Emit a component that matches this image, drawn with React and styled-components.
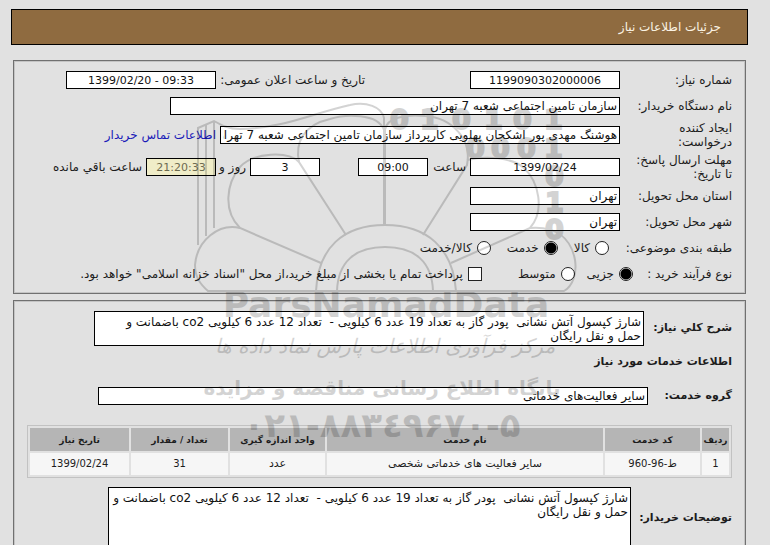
import React from "react";
import styled, { createGlobalStyle, css } from "styled-components";

const GlobalStyle = createGlobalStyle`
  html { scrollbar-width: none; }
  body { margin: 0; background: #e1e1e1; }
  *, *::before, *::after { box-sizing: border-box; }
`;

const Page = styled.main`
  position: relative;
  direction: rtl;
  padding: 9px 22px 0 11px;
  overflow: hidden;
  color: #1c1c1c;
  font: 12px/14px "DejaVu Sans", "Noto Sans", sans-serif;
`;

const TitleBar = styled.header`
  display: flex;
  align-items: center;
  height: 36px;
  padding: 0 26px;
  border: 1px solid #000;
  background: #8f6b40;
`;

const Title = styled.h1`
  margin: 0;
  color: #fbf3e4;
  font: inherit;
`;

const Panels = styled.form`
  display: flex;
  flex-direction: column;
  gap: 6px;
  margin: 15px 2px 0;
`;

const Panel = styled.fieldset`
  min-width: 0;
  margin: 0;
  padding: 6px 13px;
  border: 1px solid #707070;
  box-shadow: inset 0 0 0 1px #c4c4c4;
`;

const Row = styled.div`
  display: flex;
  align-items: center;
  gap: 4px;
  min-height: ${(p) => p.$height || 26}px;
  white-space: nowrap;
`;

const labelBox = css`
  flex: none;
  width: ${(p) => (p.$width ? `${p.$width}px` : "auto")};
  margin-right: ${(p) => p.$before || 0}px;
  white-space: ${(p) => (p.$wrap ? "pre-line" : "nowrap")};
  font-weight: ${(p) => (p.$bold ? "bold" : "normal")};
  font-size: ${(p) => (p.$bold ? 11 : 12)}px;
`;

const Label = styled.label`
  ${labelBox}
`;

const GroupName = styled.span`
  ${labelBox}
`;

const Heading = styled.h2`
  margin: 0;
  font-size: 11px;
  line-height: 26px;
`;

const box = css`
  flex: 0 1 ${(p) => p.$width}px;
  min-width: 0;
  width: ${(p) => p.$width}px;
  margin: 0;
  border: 1px solid #000;
  border-radius: 0;
  background: ${(p) => (p.$muted ? "#f0edc8" : "#fff")};
  color: ${(p) => (p.$muted ? "#6d6b50" : "#111")};
  text-align: ${(p) => (p.$numeric ? "center" : "right")};
  font: inherit;
  font-size: ${(p) => (p.$numeric ? 11 : 12)}px;
  outline: none;
`;

const TextBox = styled.input`
  ${box}
  height: 18px;
  padding: 0 2px;
`;

const TextArea = styled.textarea`
  ${box}
  display: block;
  height: ${(p) => p.$height}px;
  padding: 3px 2px 3px ${(p) => p.$inset || 0}px;
  line-height: 14px;
  resize: none;
  overflow: hidden;
`;

const Link = styled.a`
  color: #1a1ab8;
  text-decoration: none;
`;

const Option = styled.label`
  display: flex;
  align-items: center;
  gap: 5px;
  margin-left: ${(p) => p.$after || 8}px;
`;

const Radio = styled.input`
  appearance: none;
  flex: none;
  width: 14px;
  height: 14px;
  margin: 0;
  border: 1px solid #222;
  border-radius: 50%;
  background: #fff;
  &:checked {
    background: radial-gradient(circle, #000 5px, #fff 6px);
  }
`;

const Check = styled(Radio)`
  border-radius: 0;
`;

const Spacer = styled.span`
  width: 30px;
`;

const TableArea = styled.div`
  margin: 8px 0 9px;
`;

const TableFrame = styled.table`
  width: 100%;
  table-layout: fixed;
  border: 1px solid #c2c2c2;
  border-spacing: 2px;
  border-collapse: separate;
  text-align: center;
`;

const HeadCell = styled.th`
  width: ${(p) => (p.$width ? `${p.$width}px` : "auto")};
  height: 23px;
  padding: 0;
  background: #b5b5b5;
  font-size: 9px;
  white-space: nowrap;
`;

const Cell = styled.td`
  height: 22px;
  padding: 0;
  background: #f6f6f6;
  font-size: ${(p) => (p.$numeric ? 10 : 11)}px;
  white-space: nowrap;
`;

const WatermarkLayer = styled.svg`
  position: absolute;
  top: 90px;
  left: 50%;
  width: 400px;
  height: 370px;
  margin-left: -205px;
  pointer-events: none;
  opacity: 0.17;
  font-family: "DejaVu Sans", sans-serif;
  font-weight: bold;
`;

const PhoneNumber = styled.text`
  unicode-bidi: bidi-override;
`;

function Watermark() {
  return (
    <WatermarkLayer viewBox="180 90 400 370" aria-hidden="true" direction="ltr">
      <g fill="none" stroke="#000" strokeWidth="2">
        <path d="M384 225V118C382 107 366 101 350 105C310 114 285 128 240 129C228 129 221 125 214 121L198 128V245M206 125V236M214 121V228" />
        <path d="M385 225V130C386 118 405 114 425 116C453 118 472 140 467 165L423 235" />
        <path d="M384 130C378 113 345 114 330 119C303 125 295 143 299 162L346 235" />
        <path d="M299 162C288 151 254 152 240 167C226 184 223 211 240 228L321 263" />
        <path d="M240 228C219 223 197 240 195 265C195 277 200 284 208 291H564C573 286 577 273 575 260C571 238 556 226 530 228L451 263" />
        <path d="M467 160C485 156 512 157 524 168C539 182 545 211 530 228" />
        <path d="M316 291C318 248 343 225 385 225S453 248 456 291M337 291C338 262 355 247 385 247S432 262 433 291" />
      </g>
      <g fontSize="27" stroke="#000" strokeWidth="2">
        <text x="390 420 452 484 513 544" y="129">010101</text>
        <text x="466 491 517 544" y="158">0001</text>
        <text x="545" y="186">0</text>
        <text x="545" y="212">1</text>
        <text x="545" y="239">0</text>
      </g>
      <text x="386" y="317" fontSize="36" textAnchor="middle">ParsNamadData</text>
      <g textAnchor="middle" direction="rtl">
        <text x="385" y="353" fontSize="20" fontWeight="normal" fontStyle="italic">مرکز فرآوری اطلاعات پارس نماد داده ها</text>
        <text x="382" y="395" fontSize="20">پایگاه اطلاع رسانی مناقصه و مزایده</text>
      </g>
      <PhoneNumber x="382" y="437" fontSize="34" textAnchor="middle">۰۲۱-۸۸۳٤۹۶۷۰-۵</PhoneNumber>
    </WatermarkLayer>
  );
}

const description =
  "شارژ کپسول آتش نشانی  پودر گاز به تعداد 19 عدد 6 کیلویی -  تعداد 12 عدد 6 کیلویی co2 باضمانت و حمل و نقل رایگان";

const columns = [
  { name: "ردیف", width: 27, numeric: true },
  { name: "کد خدمت", width: 95, numeric: true },
  { name: "نام خدمت" },
  { name: "واحد اندازه گیری", width: 95 },
  { name: "تعداد / مقدار", width: 97, numeric: true },
  { name: "تاریخ نیاز", width: 99, numeric: true },
];

const services = [["1", "ط-96-960", "سایر فعالیت های خدماتی شخصی", "عدد", "31", "1399/02/24"]];

export default function App() {
  return (
    <Page lang="fa">
      <GlobalStyle />
      <TitleBar>
        <Title>جزئیات اطلاعات نیاز</Title>
      </TitleBar>
      <Panels>
        <Panel>
          <Row>
            <Label htmlFor="number" $width={108}>شماره نیاز:</Label>
            <TextBox id="number" $width={150} $numeric readOnly value="1199090302000006" />
            <Label htmlFor="announced" $width={145} $before={101}>تاریخ و ساعت اعلان عمومی:</Label>
            <TextBox id="announced" $width={150} $numeric dir="ltr" readOnly value="1399/02/20 - 09:33" />
          </Row>
          <Row>
            <Label htmlFor="org" $width={108}>نام دستگاه خریدار:</Label>
            <TextBox id="org" $width={450} readOnly value="سازمان تامین اجتماعی شعبه 7 تهران" />
          </Row>
          <Row $height={32}>
            <Label htmlFor="creator" $width={108} $wrap>{"ایجاد کننده\nدرخواست:"}</Label>
            <TextBox id="creator" $width={400} readOnly value="هوشنگ مهدی پور اشکجان پهلویی کارپرداز سازمان تامین اجتماعی شعبه 7 تهران" />
            <Link href="#contact">اطلاعات تماس خریدار</Link>
          </Row>
          <Row $height={32}>
            <Label htmlFor="deadline" $width={108} $wrap>{"مهلت ارسال پاسخ:\nتا تاریخ:"}</Label>
            <TextBox id="deadline" $width={150} $numeric readOnly value="1399/02/24" />
            <Label htmlFor="hour" $width={34}>ساعت</Label>
            <TextBox id="hour" $width={70} $numeric readOnly value="09:00" />
            <Spacer />
            <TextBox id="days" $width={70} $numeric readOnly value="3" />
            <Label htmlFor="days" $width={26}>روز و</Label>
            <TextBox id="left" $width={70} $numeric $muted readOnly value="21:20:33" />
            <Label htmlFor="left">ساعت باقي مانده</Label>
          </Row>
          <Row>
            <Label htmlFor="province" $width={108}>استان محل تحویل:</Label>
            <TextBox id="province" $width={150} readOnly value="تهران" />
          </Row>
          <Row>
            <Label htmlFor="city" $width={108}>شهر محل تحویل:</Label>
            <TextBox id="city" $width={150} readOnly value="تهران" />
          </Row>
          <Row role="radiogroup" aria-label="طبقه بندی موضوعی">
            <GroupName $width={119}>طبقه بندی موضوعی:</GroupName>
            <Option $after={12}><Radio type="radio" name="kind" />کالا</Option>
            <Option $after={12}><Radio type="radio" name="kind" defaultChecked />خدمت</Option>
            <Option><Radio type="radio" name="kind" />کالا/خدمت</Option>
          </Row>
          <Row role="radiogroup" aria-label="نوع فرآیند خرید">
            <GroupName $width={95}>نوع فرآیند خرید :</GroupName>
            <Option><Radio type="radio" name="process" defaultChecked />جزیی</Option>
            <Option $after={32}><Radio type="radio" name="process" />متوسط</Option>
            <Option><Check type="checkbox" />پرداخت تمام یا بخشی از مبلغ خرید،از محل "اسناد خزانه اسلامی" خواهد بود.</Option>
          </Row>
        </Panel>
        <Panel>
          <Row $height={42}>
            <Label htmlFor="summary" $width={84} $bold>شرح كلي نياز:</Label>
            <TextArea id="summary" $width={550} $height={35} $inset={18} readOnly value={description} />
          </Row>
          <Heading>اطلاعات خدمات مورد نیاز</Heading>
          <Row $height={42}>
            <Label htmlFor="group" $width={80} $bold>گروه خدمت:</Label>
            <TextBox id="group" $width={550} readOnly value="سایر فعالیت‌های خدماتی" />
          </Row>
          <TableArea>
            <TableFrame>
              <thead>
                <tr>
                  {columns.map(({ name, width }) => (
                    <HeadCell key={name} scope="col" $width={width}>{name}</HeadCell>
                  ))}
                </tr>
              </thead>
              <tbody>
                {services.map((service) => (
                  <tr key={service[0]}>
                    {service.map((value, i) => (
                      <Cell key={columns[i].name} $numeric={columns[i].numeric}>{value}</Cell>
                    ))}
                  </tr>
                ))}
              </tbody>
            </TableFrame>
          </TableArea>
          <Row>
            <Label htmlFor="notes" $width={97} $bold>توضیحات خریدار:</Label>
            <TextArea id="notes" $width={523} $height={62} readOnly value={description} />
          </Row>
        </Panel>
      </Panels>
      <Watermark />
    </Page>
  );
}
